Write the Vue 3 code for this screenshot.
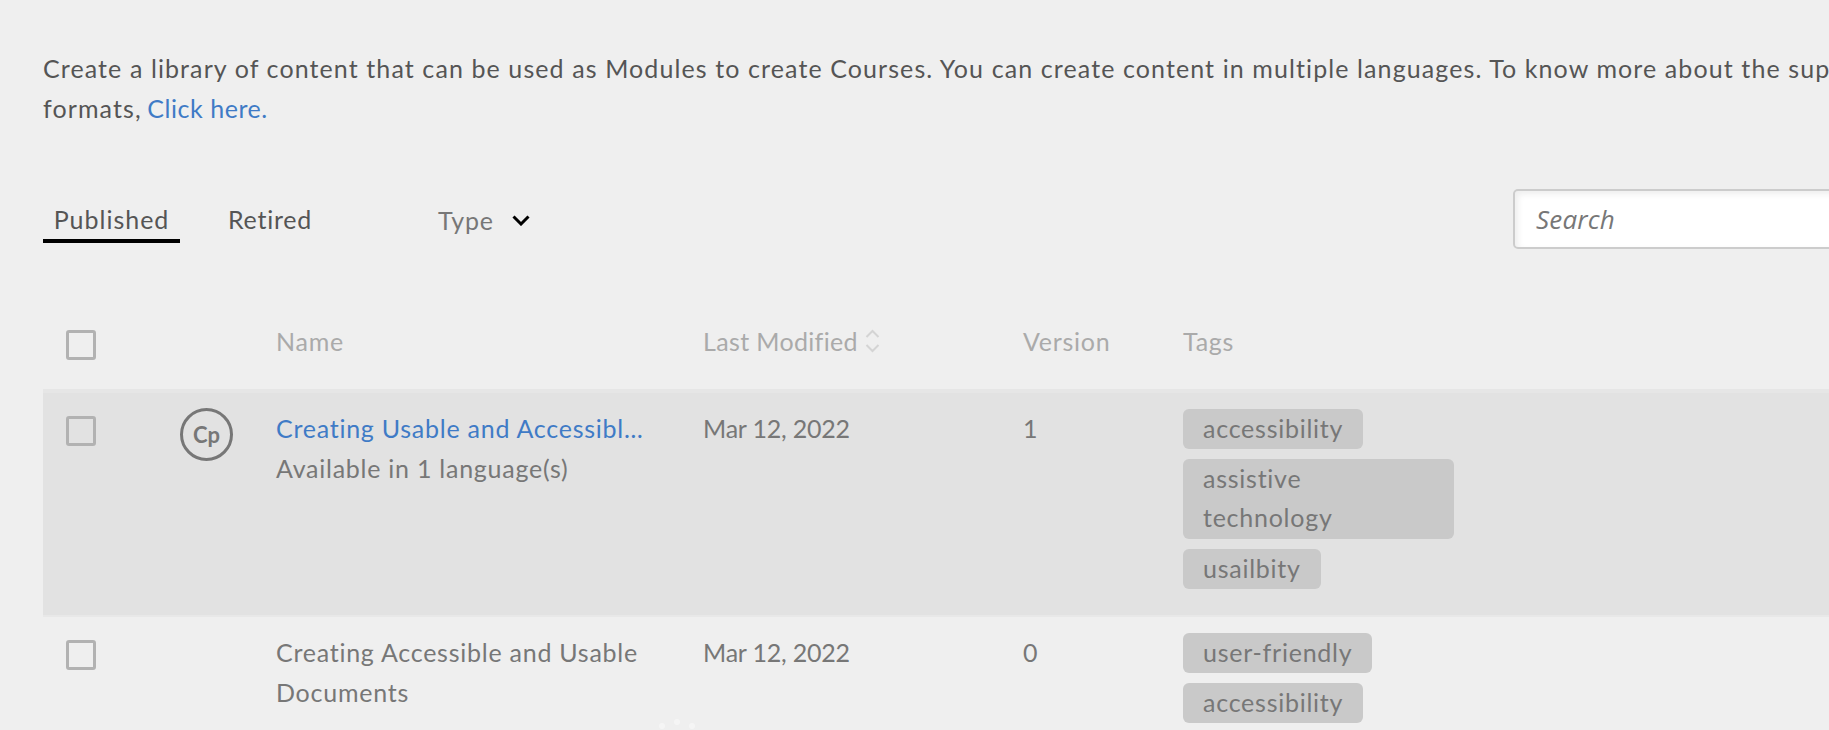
<script setup>
const rows = [
  {
    id: 1,
    active: true,
    name: 'Creating Usable and Accessible Content for Learners',
    link: true,
    sub: 'Available in 1 language(s)',
    date: 'Mar 12, 2022',
    version: '1',
    tags: ['accessibility', 'assistive technology', 'usailbity']
  },
  {
    id: 2,
    active: false,
    name: 'Creating Accessible and Usable Documents',
    link: false,
    sub: '',
    date: 'Mar 12, 2022',
    version: '0',
    tags: ['user-friendly', 'accessibility']
  }
]
const dots = Array.from({ length: 12 }, (_, i) => {
  const a = (i * Math.PI) / 6
  return { x: 40 + 30 * Math.cos(a), y: 40 + 30 * Math.sin(a) }
})
</script>

<template>
  <div class="viewport">
    <main class="page">
      <p class="intro">
        Create a library of content that can be used as Modules to create Courses. You can create content in multiple languages. To know more about the supported
        formats, <a class="link">Click here.</a>
      </p>

      <div class="toolbar">
        <button class="tab tab-on">Published</button>
        <button class="tab tab-off">Retired</button>
        <div class="type">
          <span>Type</span>
          <svg width="18" height="11" viewBox="0 0 18 11"><path d="M1.5 1.5 9 9l7.5-7.5" fill="none" stroke="#000" stroke-width="3"/></svg>
        </div>
        <div class="search">Search</div>
      </div>

      <div class="grid head">
        <div><span class="check"></span></div>
        <div></div>
        <div class="cell">Name</div>
        <div class="cell sortable">
          <span class="date">Last Modified</span>
          <svg width="15" height="24" viewBox="0 0 15 24"><path d="M1.5 8 7.5 2l6 6M1.5 16l6 6 6-6" fill="none" stroke="#d4d4d4" stroke-width="2"/></svg>
        </div>
        <div class="cell">Version</div>
        <div class="cell">Tags</div>
      </div>

      <div v-for="r in rows" :key="r.id" class="grid row" :class="{ active: r.active }">
        <div><span class="check check-row"></span></div>
        <div><div v-if="r.active" class="cp">Cp</div></div>
        <div class="cell name-cell">
          <div class="name" :class="{ 'name-link': r.link }">{{ r.name }}</div>
          <div v-if="r.sub">{{ r.sub }}</div>
        </div>
        <div class="cell date">{{ r.date }}</div>
        <div class="cell">{{ r.version }}</div>
        <div class="tags">
          <span v-for="t in r.tags" :key="t" class="tag" :class="{ 'tag-wide': t.includes(' ') }">{{ t }}</span>
        </div>
      </div>
    </main>

    <svg class="spinner" width="80" height="80" viewBox="0 0 80 80">
      <circle v-for="(d, i) in dots" :key="i" :cx="d.x" :cy="d.y" r="3" fill="#fff" opacity="0.4"/>
    </svg>
  </div>
</template>

<style>
html, body { margin: 0; background: #efefef; overflow: hidden; }
</style>

<style scoped>
.viewport {
  position: relative;
  width: 1829px;
  height: 730px;
  overflow: hidden;
  background: #efefef;
  font-family: "Lato", "Liberation Sans", sans-serif;
  font-size: 25px;
  line-height: 40px;
  letter-spacing: 0.75px;
  color: #777;
}
.page {
  width: 1870px;
  padding: 48px 0 0 43px;
}
.intro {
  margin: 0 0 61px;
  color: #555;
  letter-spacing: 1.1px;
}
.link { margin-left: -2px; color: #3f7bc6; letter-spacing: 0.55px; }
.toolbar {
  display: flex;
  align-items: flex-start;
  height: 60px;
}
.tab {
  margin-top: 10px;
  padding: 0 10px;
  height: 44px;
  border: 0;
  background: none;
  font: inherit;
  letter-spacing: inherit;
  color: #555;
  line-height: 38px;
}
.tab-on { width: 137px; border-bottom: 4px solid #000; letter-spacing: 1px; }
.tab-off { height: 40px; margin-left: 38px; }
.type {
  display: flex;
  align-items: center;
  gap: 18px;
  margin: 11px 0 0 116px;
  color: #777;
}
.search {
  box-sizing: border-box;
  width: 400px;
  height: 60px;
  margin-left: auto;
  padding-left: 21px;
  border: 2px solid #ccc;
  border-radius: 5px;
  background: #fff;
  box-shadow: inset 3px 3px 6px #eee;
  font-family: "Open Sans", sans-serif;
  font-size: 26px;
  font-style: italic;
  line-height: 56px;
  letter-spacing: 0.2px;
  color: #777;
}
.grid {
  display: grid;
  grid-template-columns: 137px 96px 427px 320px 160px 1fr;
}
.cell { margin-top: -1px; }
.date { letter-spacing: -0.2px; }
.head {
  margin-top: 73px;
  height: 67px;
  color: #aaa;
}
.sortable { display: flex; align-items: center; gap: 7px; height: 40px; }
.sortable .date { letter-spacing: 0.35px; }
.check {
  display: block;
  box-sizing: border-box;
  width: 30px;
  height: 30px;
  margin: 8px 0 0 23px;
  border: 3px solid #b2b2b2;
  border-radius: 3px;
}
.row {
  padding: 16px 0 26px;
  border-bottom: 2px solid #e8e8e8;
}
.row:not(.active) { border-bottom: 0; }
.active {
  background: #e2e2e2;
  border-top: 4px solid #e6e6e6;
}
.check-row { margin-top: 7px; }
.cp {
  box-sizing: border-box;
  display: flex;
  align-items: center;
  justify-content: center;
  width: 53px;
  height: 53px;
  margin-top: -1px;
  border: 3px solid #777;
  border-radius: 50%;
  font-size: 22px;
  font-weight: 700;
  letter-spacing: 0;
  line-height: 1;
}
.name-cell { min-width: 0; width: 375px; }
.name-link {
  color: #3f7bc6;
  white-space: nowrap;
  overflow: hidden;
  text-overflow: ellipsis;
}
.tags {
  display: flex;
  flex-direction: column;
  align-items: flex-start;
  gap: 10px;
}
.tag {
  box-sizing: border-box;
  padding: 0 20px 2px;
  border-radius: 6px;
  background: #c9c9c9;
  line-height: 38px;
  color: #777;
}
.tag-wide {
  width: 271px;
  padding: 0 110px 2px 20px;
  line-height: 39px;
}
.spinner {
  position: absolute;
  left: 637px;
  top: 712px;
}
</style>
